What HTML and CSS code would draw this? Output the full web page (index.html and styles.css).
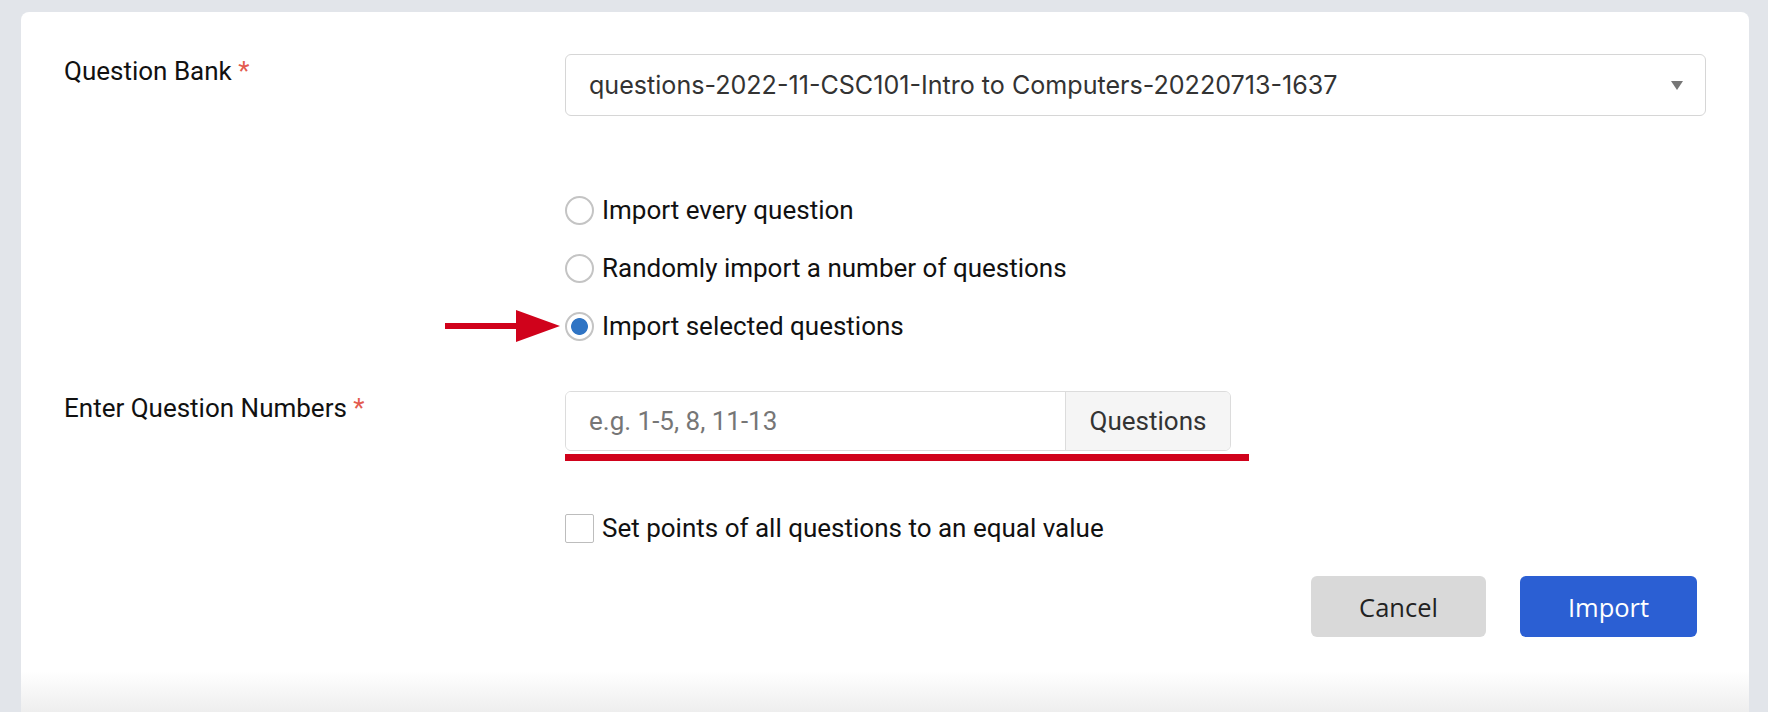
FILE: index.html
```html
<!DOCTYPE html>
<html>
<head>
  <title>Import Questions</title>
  <link rel="stylesheet" href="styles.css">
</head>
<body>
<div class="panel">
  <div class="field">
    <div class="field-label">Question Bank <span class="req">*</span></div>
    <div class="field-control">
      <div class="select">
        <span>questions-2022-11-CSC101-Intro to Computers-20220713-1637</span>
        <span class="caret"></span>
      </div>
    </div>
  </div>

  <div class="field">
    <div class="field-label"></div>
    <div class="field-control">
      <div class="radios">
        <label class="radio"><input type="radio" name="mode" /> Import every question</label>
        <label class="radio"><input type="radio" name="mode" /> Randomly import a number of questions</label>
        <label class="radio">
          <svg class="arrow" width="115" height="32" viewBox="0 0 115 32">
            <rect x="0" y="13" width="76" height="6" fill="#d0021b" />
            <polygon points="71,0 115,16 71,32" fill="#d0021b" />
          </svg>
          <input type="radio" name="mode" checked /> Import selected questions
        </label>
      </div>
    </div>
  </div>

  <div class="field numbers">
    <div class="field-label">Enter Question Numbers <span class="req">*</span></div>
    <div class="field-control">
      <div class="input-group">
        <input type="text" placeholder="e.g. 1-5, 8, 11-13" />
        <span class="addon">Questions</span>
      </div>
      <div class="underline"></div>
      <label class="check"><input type="checkbox" /> Set points of all questions to an equal value</label>
    </div>
  </div>

  <div class="actions">
    <button class="btn btn-cancel">Cancel</button>
    <button class="btn btn-primary">Import</button>
  </div>
</div>
</body>
</html>
```

FILE: styles.css
```css
html, body {
  height: 100%;
}
body {
  margin: 0;
  padding: 12px 19px 0 21px;
  box-sizing: border-box;
  background: #e2e5ea;
  font-family: Roboto, "Liberation Sans", Arial, sans-serif;
  font-size: 26px;
  color: #111;
  overflow: hidden;
}
.panel {
  height: 700px;
  box-sizing: border-box;
  padding: 42px 43px 0;
  border-radius: 8px 8px 0 0;
  background: linear-gradient(to bottom, #fff 0, #fff 659px, #eeeeee 700px);
}
.field {
  display: grid;
  grid-template-columns: 501px 1fr;
}
.field-label {
  padding-top: 2px;
  line-height: 31px;
}
.req {
  color: #e35b4f;
}
.select {
  height: 62px;
  box-sizing: border-box;
  border: 1px solid #d6d6d6;
  border-radius: 6px;
  padding: 0 22px 0 23px;
  display: flex;
  align-items: center;
  justify-content: space-between;
  font-family: Inter, Roboto, sans-serif;
  font-size: 25.1px;
  color: #333;
}
.caret {
  width: 0;
  height: 0;
  border-left: 6px solid transparent;
  border-right: 6px solid transparent;
  border-top: 9px solid #777;
}
.radios {
  margin-top: 65px;
}
.radio {
  position: relative;
  display: flex;
  align-items: center;
  height: 58px;
}
.radio input {
  appearance: none;
  margin: 0 8px 0 0;
  width: 29px;
  height: 29px;
  border: 2.5px solid #c4c4c4;
  border-radius: 50%;
  box-sizing: border-box;
  background: #fff;
}
.radio input:checked {
  background: radial-gradient(circle, #2f74c4 0, #2f74c4 8px, #fff 8.8px);
}
.arrow {
  position: absolute;
  left: -120px;
  top: 13px;
}
.numbers {
  margin-top: 36px;
}
.input-group {
  display: flex;
  width: 666px;
  height: 60px;
  box-sizing: border-box;
  border: 1px solid #dcdcdc;
  border-radius: 6px;
  overflow: hidden;
}
.input-group input {
  flex: 1;
  min-width: 0;
  border: 0;
  padding: 0 23px;
  font: inherit;
  color: #333;
  outline: none;
}
.input-group input::placeholder {
  color: #767676;
}
.addon {
  width: 164px;
  display: flex;
  align-items: center;
  justify-content: center;
  background: #f5f5f5;
  border-left: 1px solid #dcdcdc;
  color: #333;
}
.underline {
  margin-top: 3px;
  width: 684px;
  height: 7px;
  background: #d0021b;
}
.check {
  display: flex;
  align-items: center;
  height: 40px;
  margin-top: 47px;
}
.check input {
  appearance: none;
  margin: 0 8px 0 0;
  width: 29px;
  height: 29px;
  border: 1.5px solid #bdbdbd;
  border-radius: 2px;
  box-sizing: border-box;
  background: #fff;
}
.actions {
  display: flex;
  justify-content: flex-end;
  gap: 34px;
  margin-top: 28px;
  padding-right: 9px;
}
.btn {
  height: 61px;
  border: 0;
  border-radius: 6px;
  font-family: "Open Sans", "Noto Sans", sans-serif;
  font-size: 25.5px;
  font-weight: 500;
}
.btn-cancel {
  width: 175px;
  background: #d9d9d9;
  color: #222;
}
.btn-primary {
  width: 177px;
  background: #2b5fd3;
  color: #fff;
}
```
